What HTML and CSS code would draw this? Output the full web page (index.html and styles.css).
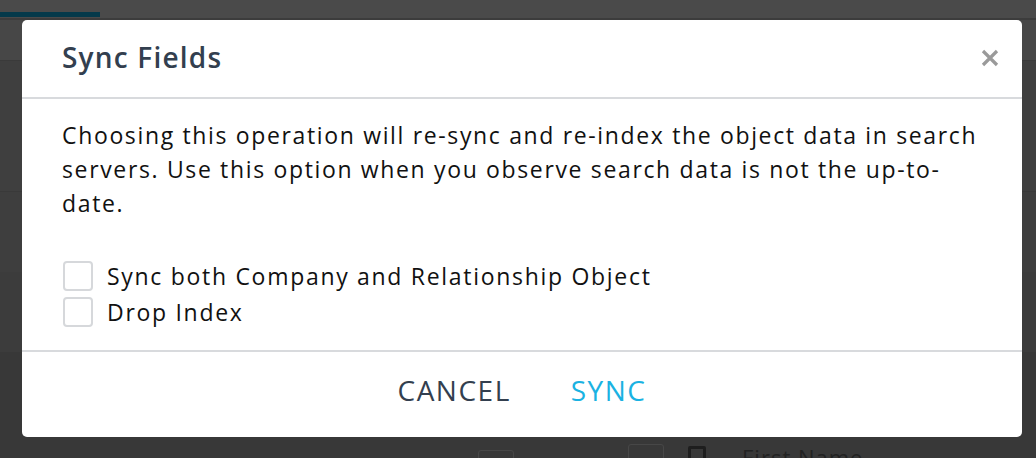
FILE: index.html
```html
<!DOCTYPE html>
<html>
<head>
<meta charset="utf-8">
<link rel="stylesheet" href="styles.css">
</head>
<body>
<div class="page">
  <div class="topbar"><div class="tab"></div></div>
  <div class="band b1"></div>
  <div class="band b2"></div>
  <div class="band b3"></div>
  <div class="band b4"></div>
  <div class="band b5">
    <div class="rowitems">
      <span class="bgbox small"></span>
      <span class="bgbox">&lsaquo;</span>
      <span class="bgicon"></span>
      <span class="bgtext">First Name</span>
    </div>
  </div>
</div>

<div class="modal">
  <div class="modal-header">
    <h2 class="title">Sync Fields</h2>
    <span class="close">
      <svg width="18" height="18" viewBox="0 0 18 18"><path d="M2 2 L16 16 M16 2 L2 16" stroke="#9a9a9a" stroke-width="3.2" stroke-linecap="butt"/></svg>
    </span>
  </div>
  <div class="modal-body">
    <p class="desc">Choosing this operation will re-sync and re-index the object data in search servers. Use this option when you observe search data is not the up-to-date.</p>
    <div class="options">
      <label class="opt"><span class="cb"></span>Sync both Company and Relationship Object</label>
      <label class="opt"><span class="cb"></span>Drop Index</label>
    </div>
  </div>
  <div class="modal-footer">
    <button class="btn cancel">CANCEL</button>
    <button class="btn sync">SYNC</button>
  </div>
</div>
</body>
</html>
```

FILE: styles.css
```css
html, body {
  margin: 0;
  padding: 0;
}
body {
  width: 1036px;
  height: 458px;
  overflow: hidden;
  background: #3d3d3d;
  font-family: "Open Sans", "Liberation Sans", sans-serif;
  position: relative;
}
.page {
  display: flex;
  flex-direction: column;
  height: 458px;
}
.topbar {
  height: 18px;
  background: #4a4a4a;
  display: flex;
  align-items: flex-end;
  border-bottom: 2px solid #3c3c3c;
}
.tab {
  width: 100px;
  height: 5px;
  margin-bottom: 1px;
  background: #04394a;
}
.band { flex: none; }
.b1 { height: 40px; background: #474747; }
.b2 { height: 130px; background: #3f3f3f; border-top: 1px solid #3a3a3a; }
.b3 { height: 80px; background: #3e3e3e; border-top: 1px solid #393939; }
.b4 { height: 80px; background: #3c3c3c; }
.b5 { flex: 1; background: #383838; overflow: hidden; }
.rowitems {
  display: flex;
  align-items: flex-start;
  padding-left: 478px;
  padding-top: 92px;
}
.bgbox {
  width: 34px;
  height: 30px;
  border: 1px solid #474747;
  border-radius: 3px;
  color: #1e1e1e;
  font-size: 22px;
  text-align: center;
  line-height: 30px;
}
.bgbox.small { margin-right: 114px; margin-top: 6px; }
.bgicon {
  width: 12px;
  height: 22px;
  border: 3px solid #1e1e1e;
  border-radius: 2px;
  margin-left: 24px;
  margin-top: 2px;
}
.bgtext {
  color: #222;
  font-size: 22px;
  line-height: 22px;
  letter-spacing: 1px;
  margin-left: 36px;
  margin-top: 2px;
}

.modal {
  position: absolute;
  left: 22px;
  top: 20px;
  width: 1000px;
  height: 417px;
  background: #fff;
  border-radius: 5px;
  display: flex;
  flex-direction: column;
}
.modal-header {
  flex: none;
  height: 79px;
  border-bottom: 2px solid #d8dadd;
  display: flex;
  align-items: center;
  justify-content: space-between;
  padding: 0 23px 4px 40px;
  box-sizing: border-box;
}
.title {
  margin: 0;
  font-size: 28px;
  font-weight: 600;
  color: #333f4f;
  letter-spacing: 1.2px;
}
.close {
  display: flex;
  padding-top: 2px;
}
.modal-body {
  flex: 1;
  padding: 19px 40px 0 40px;
}
.desc {
  margin: 0;
  font-size: 23px;
  line-height: 34px;
  color: #111;
  letter-spacing: 1.65px;
}
.options {
  margin-top: 40px;
  display: flex;
  flex-direction: column;
  gap: 4px;
}
.opt {
  display: flex;
  align-items: center;
  gap: 14px;
  font-size: 23px;
  color: #111;
  letter-spacing: 1.7px;
}
.cb {
  width: 26px;
  height: 26px;
  border: 2px solid #d6d8db;
  border-radius: 4px;
  box-sizing: content-box;
  margin-left: 1px;
}
.modal-footer {
  flex: none;
  height: 87px;
  border-top: 2px solid #d8dadd;
  display: flex;
  justify-content: center;
  align-items: center;
  gap: 60px;
  padding-bottom: 9px;
  box-sizing: border-box;
}
.btn {
  background: none;
  border: none;
  font-family: inherit;
  font-size: 28px;
  padding: 0;
  letter-spacing: 1.5px;
}
.cancel { color: #333f4f; }
.sync { color: #1ab2e2; }
```
